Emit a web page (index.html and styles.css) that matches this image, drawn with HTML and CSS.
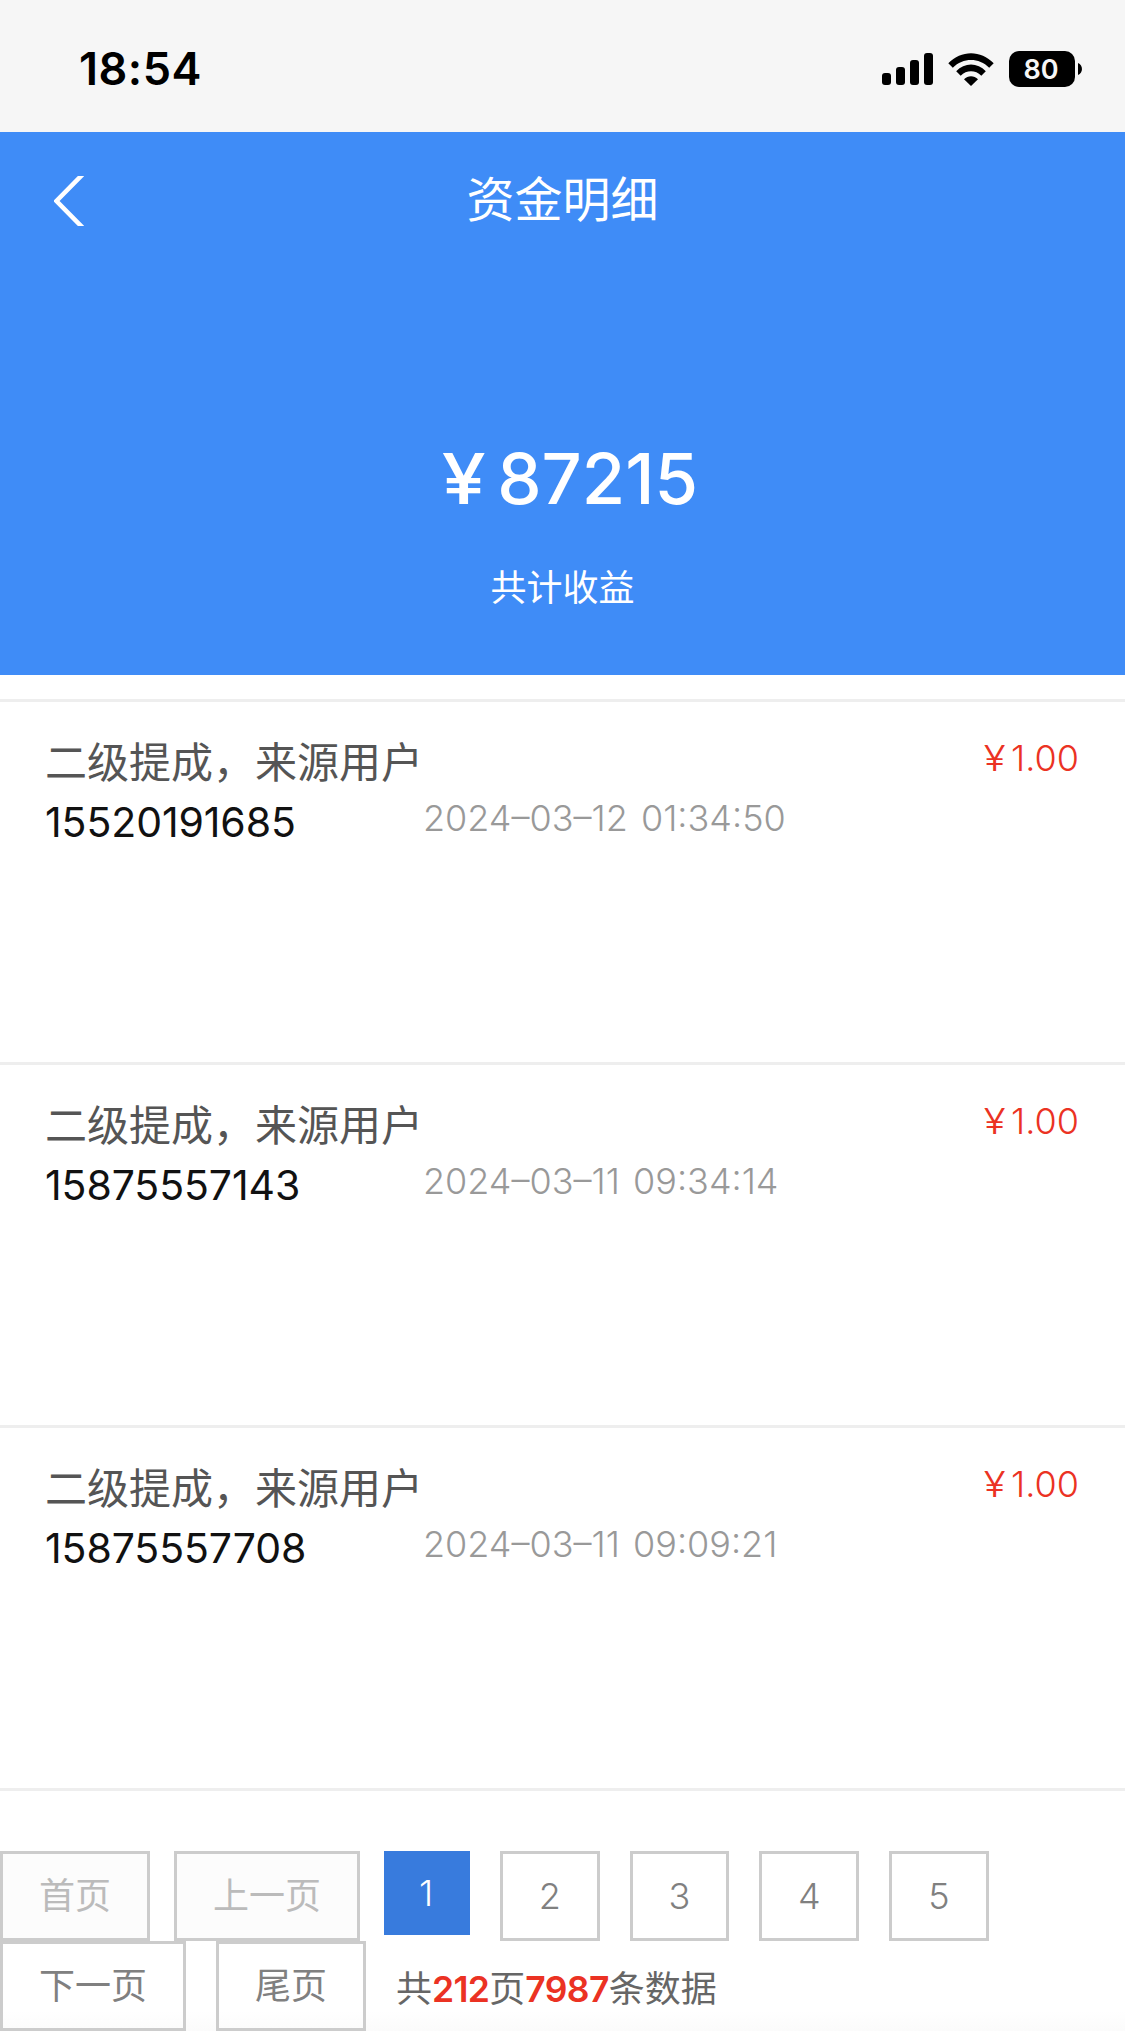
FILE: index.html
```html
<!DOCTYPE html>
<html lang="zh-CN">
<head>
<meta charset="utf-8">
<title>资金明细</title>
<link rel="stylesheet" href="styles.css">
</head>
<body>
<div class="status-bar">
  <span class="clock">18:54</span>
  <div class="indicators">
    <svg class="signal" width="51" height="32" viewBox="0 0 51 32"><rect y="20" width="9" height="12" rx="3"/><rect x="14" y="14" width="9" height="18" rx="3"/><rect x="28" y="7" width="9" height="25" rx="3"/><rect x="42" width="9" height="32" rx="3"/></svg>
    <svg class="wifi" width="46" height="33" viewBox="0 0 46 33"><path d="M0.3 10.2C13-3.2 33-3.2 45.7 10.2L41.2 14.7C31 4.4 15 4.4 4.8 14.7Z"/><path d="M8.200 18.200C16.500 9.300 29.500 9.300 37.800 18.200L33.300 22.700C27.500 16.900 18.500 16.900 12.700 22.700Z"/><path d="M16 26.200C20 22.100 26 22.100 30 26.200L23 33Z"/></svg>
    <div class="battery"><span class="battery-level">80</span><svg width="4" height="12" viewBox="0 0 4 12"><path d="M0 0C5.300 2 5.300 10 0 12Z"/></svg></div>
  </div>
</div>
<header class="hero">
  <nav class="nav">
    <svg class="back" width="30" height="50" viewBox="0 0 30 50"><path d="M28.500 -1.500L2.500 25L28.500 51.500"/></svg>
    <h1 class="title">资金明细</h1>
  </nav>
  <div class="total"><span class="yen">¥</span><span class="sum">87215</span></div>
  <div class="total-label">共计收益</div>
</header>
<main class="list">
  <article class="row">
    <div class="source">二级提成，来源用户 <span class="phone">15520191685</span></div>
    <time class="date">2024–03–12 01:34:50</time>
    <div class="amount"><span class="yen">¥</span>1.00</div>
  </article>
  <article class="row">
    <div class="source">二级提成，来源用户 <span class="phone">15875557143</span></div>
    <time class="date">2024–03–11 09:34:14</time>
    <div class="amount"><span class="yen">¥</span>1.00</div>
  </article>
  <article class="row">
    <div class="source">二级提成，来源用户 <span class="phone">15875557708</span></div>
    <time class="date">2024–03–11 09:09:21</time>
    <div class="amount"><span class="yen">¥</span>1.00</div>
  </article>
</main>
<footer class="pager">
  <div class="pager-line">
    <a class="page disabled first">首页</a>
    <a class="page disabled wide">上一页</a>
    <a class="page current">1</a>
    <a class="page number">2</a>
    <a class="page number">3</a>
    <a class="page number">4</a>
    <a class="page number">5</a>
  </div>
  <div class="pager-line second">
    <a class="page wide">下一页</a>
    <a class="page first">尾页</a>
    <p class="summary">共<b>212</b>页<b>7987</b>条数据</p>
  </div>
</footer>
</body>
</html>
```
FILE: styles.css
```css
* { box-sizing: border-box; }

body {
  margin: 0;
  height: 2032px;
  overflow: hidden;
  background: #fff;
  font-family: Inter, "Noto Sans CJK SC", sans-serif;
  font-size: 36px;
}

.status-bar {
  display: flex;
  justify-content: space-between;
  height: 132px;
  padding: 51px 43px 0 79px;
  background: #f6f6f6;
}
.clock { font-size: 45px; font-weight: 600; line-height: 36px; letter-spacing: 0.5px; }
.indicators { display: flex; height: 36px; align-items: center; }
.signal { margin-right: 15px; }
.wifi { margin-right: 15px; }
.battery { display: flex; align-items: center; gap: 3px; }
.battery-level {
  width: 66px;
  height: 36px;
  padding-right: 2px;
  border-radius: 10px;
  background: #000;
  color: #f6f6f6;
  font-size: 27px;
  font-weight: 600;
  line-height: 37px;
  text-align: center;
}

.hero { height: 543px; background: #3f8cf7; color: #fff; text-align: center; }
.nav {
  display: grid;
  grid-template-columns: 84px 1fr 84px;
  align-items: center;
  height: 138px;
}
.back { justify-self: end; fill: none; stroke: #fff; stroke-width: 4.500; }
.title { margin: -2px 0 0; font-size: 48px; font-weight: 400; line-height: 72px; }
.total {
  display: flex;
  justify-content: center;
  gap: 14px;
  padding: 167px 0 0 17px;
  font-size: 70.5px;
  font-weight: 500;
  line-height: 84px;
}
.yen { transform: scaleX(1.12); }
.total-label { padding-top: 40px; font-weight: 400; line-height: 54px; }

.list { height: 1116px; padding-top: 24px; border-bottom: 3px solid #eee; }
.row {
  display: grid;
  grid-template-columns: 378px 1fr auto;
  height: 363px;
  padding: 28px 46px 0 45px;
  border-top: 3px solid #eee;
}
.source { padding-top: 3px; color: #555; font-size: 42px; font-weight: 400; line-height: 60px; }
.phone {
  display: block;
  margin-top: -1px;
  color: #111;
  font-size: 41px;
  letter-spacing: -0.1px;
}
.date { padding-top: 60px; color: #999; font-weight: 350; line-height: 57px; word-spacing: 3px; }
.amount { display: flex; gap: 7px; color: #eb3223; font-weight: 350; line-height: 57px; }

.pager { padding-top: 60px; color: #808080; }
.pager-line { display: flex; height: 90px; gap: 30px; align-items: flex-start; }
.page {
  height: 90px;
  border: 3px solid #ccc;
  font-weight: 400;
  line-height: 84px;
  text-align: center;
}
.first { width: 150px; }
.wide { width: 186px; }
.number { width: 99.7px; font-weight: 350; }
.disabled { margin-right: -6px; background: #fcfcfc; color: #bbb; }
.current {
  width: 86px;
  height: 84px;
  padding-right: 2px;
  border: 0;
  background: #387bdd;
  color: #fff;
  font-weight: 350;
}
.second { background: linear-gradient(#fff 70px, #fbfbfb); }
.summary { margin: 0; padding-top: 3px; color: #666; font-weight: 400; line-height: 90px; }
.summary b { font-size: 35.5px; color: #eb3223; font-weight: 600; letter-spacing: -0.65px; }
```
